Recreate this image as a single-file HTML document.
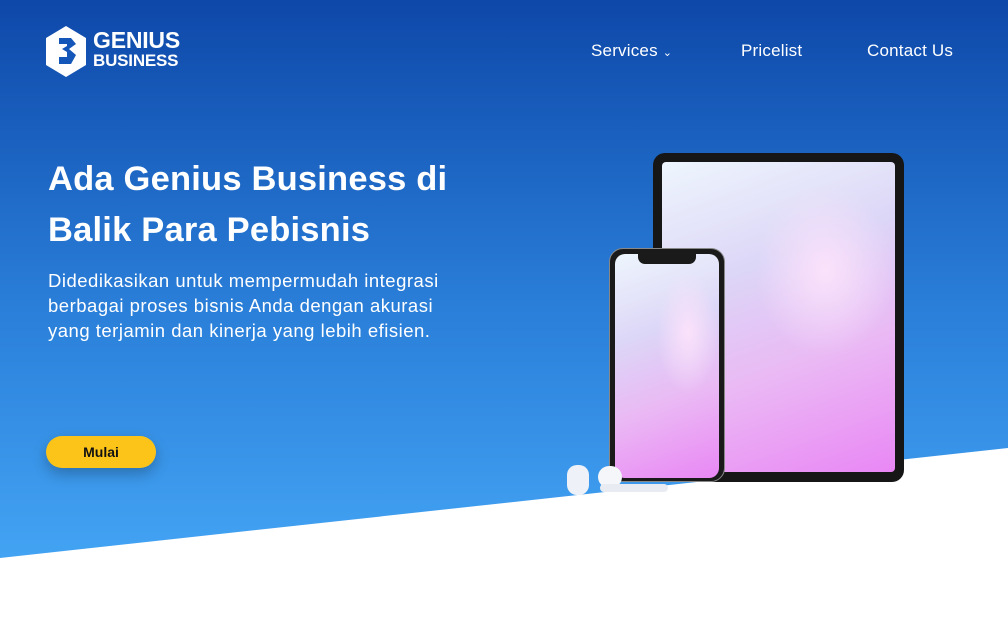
<!DOCTYPE html>
<html><head><style>
body{margin:0;width:1008px;height:618px;overflow:hidden;font-family:"Liberation Sans",sans-serif;background:#fff;position:relative}
.bg{position:absolute;left:0;top:0;width:1008px;height:618px;background:linear-gradient(180deg,#0e48a9 0%,#2a7fd9 50%,#43a3f3 90%);clip-path:polygon(0 0,1008px 0,1008px 448px,0 558px)}
.nav{position:absolute;top:41px;color:#fff;font-size:17px;letter-spacing:.2px}
h1{position:absolute;left:48px;top:154px;margin:0;color:#fff;font-size:34.5px;line-height:51px;font-weight:bold;width:460px;letter-spacing:.2px}
p{position:absolute;left:48px;top:268px;margin:0;color:#fff;font-size:18.5px;line-height:25px;width:430px;letter-spacing:.5px}
.btn{position:absolute;left:46px;top:436px;width:110px;height:32px;border-radius:16px;background:#fcc419;font-weight:bold;font-size:14px;text-align:center;line-height:32px;color:#111;box-shadow:0 6px 14px rgba(0,0,0,.25)}
.scr{background:radial-gradient(ellipse at 70% 35%,#fbe2fb 0,transparent 30%),linear-gradient(160deg,#eef6fd 0%,#dcd6f7 35%,#eab8f4 65%,#e987f5 100%)}
</style></head><body>
<div class="bg"></div>
<svg style="position:absolute;left:45px;top:25px" width="42" height="53" viewBox="0 0 42 53"><polygon points="21,1 41,13 41,40 21,52 1,40 1,13" fill="#fff"/><polygon points="14,13 26,13 31,19 24,24 31,30 26,39 14,39 14,32 22,32 22,27 17,24 22,21 22,19 14,19" fill="#1557b8"/></svg>
<div style="position:absolute;left:93px;top:30px;color:#fff;font-weight:bold;font-size:23px;line-height:20px;letter-spacing:-.2px">GENIUS</div>
<div style="position:absolute;left:93px;top:52px;color:#fff;font-weight:bold;font-size:17px;line-height:18px;letter-spacing:-.2px">BUSINESS</div>
<div class="nav" style="left:591px">Services <span style="font-size:11px">&#8964;</span></div>
<div class="nav" style="left:741px">Pricelist</div>
<div class="nav" style="left:867px">Contact Us</div>
<h1>Ada Genius Business di Balik Para Pebisnis</h1>
<p>Didedikasikan untuk mempermudah integrasi berbagai proses bisnis Anda dengan akurasi yang terjamin dan kinerja yang lebih efisien.</p>
<div class="btn">Mulai</div>
<div style="position:absolute;left:653px;top:153px;width:251px;height:329px;border-radius:12px;background:#161616"></div>
<div class="scr" style="position:absolute;left:662px;top:162px;width:233px;height:310px;border-radius:4px"></div>
<div style="position:absolute;left:609px;top:248px;width:116px;height:234px;border-radius:14px;background:#1a1a1a;border:1px solid #888;box-sizing:border-box"></div>
<div class="scr" style="position:absolute;left:615px;top:254px;width:104px;height:224px;border-radius:10px"></div>
<div style="position:absolute;left:638px;top:254px;width:58px;height:10px;background:#1a1a1a;border-radius:0 0 7px 7px"></div>
<div style="position:absolute;left:567px;top:465px;width:22px;height:30px;border-radius:10px;background:#eef2f8"></div>
<div style="position:absolute;left:598px;top:466px;width:24px;height:22px;border-radius:12px;background:#f4f6fa"></div>
<div style="position:absolute;left:600px;top:484px;width:68px;height:8px;border-radius:4px;background:#e8ecf2"></div>
</body></html>
